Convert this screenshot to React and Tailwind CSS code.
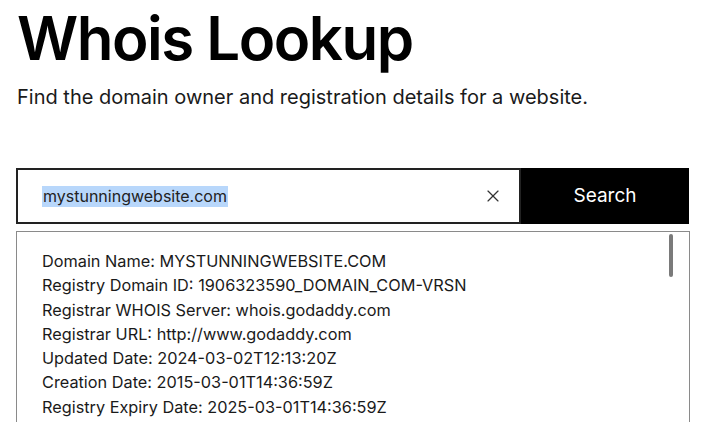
import React from 'react';
import { X } from 'lucide-react';

const lines = [
  'Domain Name: MYSTUNNINGWEBSITE.COM',
  'Registry Domain ID: 1906323590_DOMAIN_COM-VRSN',
  'Registrar WHOIS Server: whois.godaddy.com',
  'Registrar URL: http://www.godaddy.com',
  'Updated Date: 2024-03-02T12:13:20Z',
  'Creation Date: 2015-03-01T14:36:59Z',
  'Registry Expiry Date: 2025-03-01T14:36:59Z',
];

export default function App() {
  return (
    <div className="w-[720px] h-[422px] overflow-hidden bg-white text-black font-['Inter',sans-serif]">
      <div className="pl-[17px]">
        <h1 className="text-[60px] leading-[76px] font-semibold tracking-[-1.5px]">Whois Lookup</h1>
        <p className="mt-[9px] text-[20px] leading-[24px] text-[#1a1a1a]">
          Find the domain owner and registration details for a website.
        </p>
      </div>

      {/* search bar */}
      <div className="ml-[16px] mt-[59px] flex w-[673px] h-[56px]">
        <div className="flex-1 flex items-center border-2 border-[#222] pl-[24px] pr-[16px]">
          <span className="text-[16px] leading-[21px] text-[#222] bg-[#b8d7fb] px-[1px]">mystunningwebsite.com</span>
          <X className="ml-auto w-[20px] h-[20px] text-[#333]" strokeWidth={1.4} />
        </div>
        <button className="w-[168px] bg-black text-white text-[19px]">Search</button>
      </div>

      {/* results */}
      <div className="relative ml-[16px] mt-[7px] w-[674px] h-[200px] border-[1.5px] border-b-0 border-[#8a8a8a] pl-[25px] pt-[17px]">
        <div className="absolute right-[16px] top-[2px] w-[4px] h-[43px] rounded-full bg-[#7a7a7a]" />
        {lines.map((l) => (
          <div key={l} className="text-[16.3px] leading-[24.3px] text-[#1a1a1a]">{l}</div>
        ))}
      </div>
    </div>
  );
}
